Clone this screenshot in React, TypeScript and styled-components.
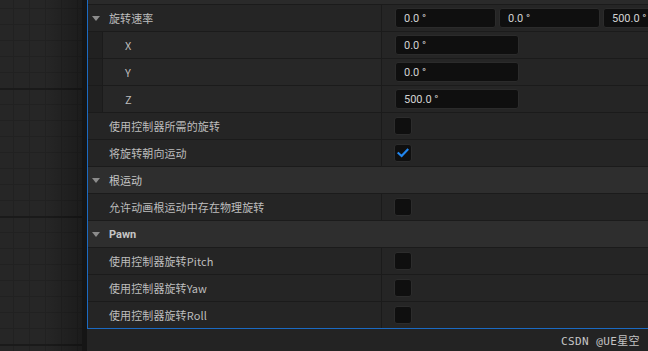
import React from "react";
import styled, { createGlobalStyle } from "styled-components";

const GlobalStyle = createGlobalStyle`
  html, body {
    margin: 0;
    padding: 0;
    background: #232323;
    overflow: hidden;
  }
  body {
    font-family: "Noto Sans CJK SC", "Noto Sans", sans-serif;
  }
`;

type Row =
  | { kind: "prop"; label: string; expander?: boolean; values?: string[]; check?: boolean }
  | { kind: "sub"; label: string; value: string }
  | { kind: "category"; label: string };

const ROWS: Row[] = [
  { kind: "prop", label: "旋转速率", expander: true, values: ["0.0 °", "0.0 °", "500.0 °"] },
  { kind: "sub", label: "X", value: "0.0 °" },
  { kind: "sub", label: "Y", value: "0.0 °" },
  { kind: "sub", label: "Z", value: "500.0 °" },
  { kind: "prop", label: "使用控制器所需的旋转", check: false },
  { kind: "prop", label: "将旋转朝向运动", check: true },
  { kind: "category", label: "根运动" },
  { kind: "prop", label: "允许动画根运动中存在物理旋转", check: false },
  { kind: "category", label: "Pawn" },
  { kind: "prop", label: "使用控制器旋转Pitch", check: false },
  { kind: "prop", label: "使用控制器旋转Yaw", check: false },
  { kind: "prop", label: "使用控制器旋转Roll", check: false },
];

export default function App() {
  return (
    <>
      <GlobalStyle />
      <Page>
        <Viewport />
        <Splitter />
        <Details>
          <Table>
            <TopStrip />
            {ROWS.map((row, idx) => {
              if (row.kind === "category") {
                return (
                  <CategoryRow key={idx}>
                    <Expander />
                    <CategoryLabel $latin={row.label === "Pawn"}>{row.label}</CategoryLabel>
                  </CategoryRow>
                );
              }
              if (row.kind === "sub") {
                return (
                  <PropRow key={idx}>
                    <Indent />
                    <SubName>
                      <Label>{row.label}</Label>
                    </SubName>
                    <ValueCell>
                      <NumberBox $width={124}>{row.value}</NumberBox>
                    </ValueCell>
                  </PropRow>
                );
              }
              return (
                <PropRow key={idx}>
                  <NameCell>
                    {row.expander ? <Expander /> : <ExpanderSpace />}
                    <Label>{row.label}</Label>
                  </NameCell>
                  <ValueCell>
                    {row.values &&
                      row.values.map((v, i) => (
                        <NumberBox key={i} $width={101}>
                          {v}
                        </NumberBox>
                      ))}
                    {row.check !== undefined && (
                      <CheckBox>
                        {row.check && (
                          <svg width="12" height="10" viewBox="0 0 12 10">
                            <path
                              d="M1.5 5.2 L4.6 8 L10.5 1.8"
                              fill="none"
                              stroke="#2186ee"
                              strokeWidth="2.2"
                              strokeLinecap="square"
                            />
                          </svg>
                        )}
                      </CheckBox>
                    )}
                  </ValueCell>
                </PropRow>
              );
            })}
          </Table>
          <Footer>CSDN @UE星空</Footer>
        </Details>
      </Page>
    </>
  );
}

const Page = styled.div`
  display: flex;
  width: 648px;
  height: 351px;
  overflow: hidden;
`;

const Viewport = styled.div`
  width: 82px;
  flex-shrink: 0;
  background-color: #262626;
  background-image: linear-gradient(to right, rgba(0, 0, 0, 0) 55%, rgba(0, 0, 0, 0.28)),
    linear-gradient(#1a1a1a 2px, transparent 2px),
    linear-gradient(to right, #212121 1px, transparent 1px),
    linear-gradient(#212121 1px, transparent 1px);
  background-size: 100% 100%, 100% 128px, 16px 16px, 16px 16px;
  background-position: 0 0, 0 88px, 13px 0, 0 8px;
`;

const Splitter = styled.div`
  width: 5px;
  flex-shrink: 0;
  background: #151515;
`;

const Details = styled.div`
  flex: 1;
  display: flex;
  flex-direction: column;
  min-width: 0;
  background: #232323;
`;

const Table = styled.div`
  display: flex;
  flex-direction: column;
  border-left: 1px solid #1b6ac2;
  border-bottom: 1px solid #1b6ac2;
`;

const TopStrip = styled.div`
  height: 4px;
  background: #2a2a2a;
  border-bottom: 1px solid #1b1b1b;
`;

const PropRow = styled.div`
  display: flex;
  height: 27px;
  box-sizing: border-box;
  border-bottom: 1px solid #1b1b1b;
  background: #252525;

  &:last-child {
    border-bottom: none;
    height: 26px;
  }
`;

const CategoryRow = styled.div`
  display: flex;
  align-items: center;
  height: 27px;
  box-sizing: border-box;
  border-bottom: 1px solid #1b1b1b;
  background: #2e2e2e;
  padding-left: 4px;
`;

const NameCell = styled.div`
  width: 294px;
  flex-shrink: 0;
  box-sizing: border-box;
  border-right: 1px solid #1b1b1b;
  display: flex;
  align-items: center;
  padding-left: 4px;
`;

const Indent = styled.div`
  width: 15px;
  flex-shrink: 0;
  box-sizing: border-box;
  background: #212121;
  border-right: 1px solid #1b1b1b;
`;

const SubName = styled.div`
  width: 279px;
  flex-shrink: 0;
  box-sizing: border-box;
  border-right: 1px solid #1b1b1b;
  background: #272727;
  display: flex;
  align-items: center;
  padding-left: 22px;
`;

const Expander = styled.span`
  width: 0;
  height: 0;
  border-left: 4px solid transparent;
  border-right: 4px solid transparent;
  border-top: 5px solid #8c8c8c;
  margin-right: 9px;
  margin-top: 1px;
`;

const ExpanderSpace = styled.span`
  width: 17px;
  flex-shrink: 0;
`;

const Label = styled.span`
  font-size: 11px;
  color: #bdbdbd;
  white-space: nowrap;
  letter-spacing: 0.1px;
`;

const CategoryLabel = styled.span<{ $latin?: boolean }>`
  font-size: 11px;
  color: #c6c6c6;
  font-weight: ${(p) => (p.$latin ? 700 : 400)};
  font-family: ${(p) => (p.$latin ? `"Roboto", "Noto Sans", sans-serif` : `"Noto Sans CJK SC", sans-serif`)};
  white-space: nowrap;
`;

const ValueCell = styled.div`
  flex: 1;
  min-width: 0;
  display: flex;
  align-items: center;
  gap: 3px;
  padding-left: 13px;
  overflow: hidden;
`;

const NumberBox = styled.div<{ $width: number }>`
  width: ${(p) => p.$width}px;
  flex-shrink: 0;
  height: 20px;
  box-sizing: border-box;
  background: #0f0f0f;
  border: 1px solid #2b2b2b;
  border-radius: 3px;
  padding-left: 8px;
  display: flex;
  align-items: center;
  font-family: "Roboto", "Liberation Sans", sans-serif;
  font-size: 11px;
  color: #d2d2d2;
  white-space: nowrap;
`;

const CheckBox = styled.div`
  width: 18px;
  height: 18px;
  margin-left: -1px;
  box-sizing: border-box;
  background: #0f0f0f;
  border: 1px solid #2c2c2c;
  border-radius: 3px;
  display: flex;
  align-items: center;
  justify-content: center;
`;

const Footer = styled.div`
  flex: 1;
  display: flex;
  align-items: center;
  justify-content: flex-end;
  padding-right: 8px;
  font-family: "DejaVu Sans Mono", "Noto Sans CJK SC", monospace;
  font-size: 11px;
  letter-spacing: 0.4px;
  color: #c4c4c4;
`;
